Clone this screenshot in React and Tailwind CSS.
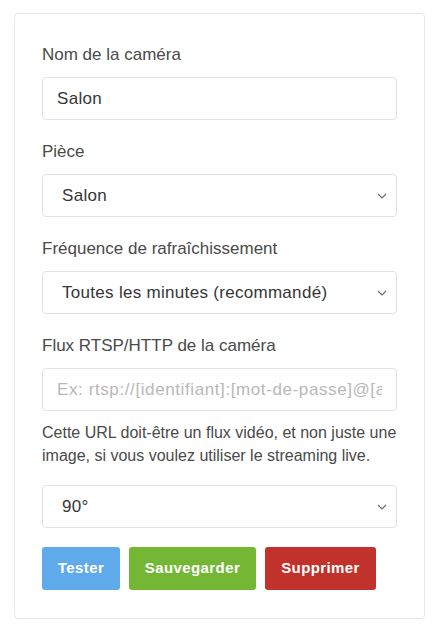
import React, { useState } from 'react';

const Chevron = () => (
  <svg className="pointer-events-none absolute right-[10px] top-1/2 -translate-y-1/2" width="10" height="6" viewBox="0 0 10 6" fill="none">
    <path d="M1 1l4 4 4-4" stroke="#6b6b6b" strokeWidth="1.2" />
  </svg>
);

const Select = ({ value, options, onChange }) => (
  <div className="relative">
    <select
      value={value}
      onChange={(e) => onChange(e.target.value)}
      className="h-[43px] w-full appearance-none rounded-[4px] border border-[#e2e2e2] bg-white pl-[19px] pr-8 text-[17px] tracking-[0.3px] text-[#363636] outline-none"
    >
      {options.map((o) => (
        <option key={o}>{o}</option>
      ))}
    </select>
    <Chevron />
  </div>
);

const Label = ({ children }) => (
  <label className="mb-[10px] block text-[17px] leading-[24px] text-[#4a4a4a]">{children}</label>
);

export default function App() {
  const [name, setName] = useState('Salon');
  const [room, setRoom] = useState('Salon');
  const [freq, setFreq] = useState('Toutes les minutes (recommandé)');
  const [url, setUrl] = useState('');
  const [rot, setRot] = useState('90°');

  return (
    <div className="min-h-screen bg-white pl-[14px] pr-[20px] pt-[13px] font-['Liberation_Sans',Arial,sans-serif]">
      <div className="rounded-[4px] border border-[#e6e6e6] pl-[27px] pr-[27px] pt-[29px] pb-[28px]">
        {/* Camera name */}
        <Label>Nom de la caméra</Label>
        <input
          value={name}
          onChange={(e) => setName(e.target.value)}
          className="h-[43px] w-full rounded-[4px] border border-[#e2e2e2] px-[14px] text-[17px] tracking-[0.3px] text-[#363636] outline-none"
        />

        <div className="mt-[20px]">
          <Label>Pièce</Label>
          <Select value={room} options={['Salon', 'Cuisine', 'Chambre']} onChange={setRoom} />
        </div>

        <div className="mt-[20px]">
          <Label>Fréquence de rafraîchissement</Label>
          <Select
            value={freq}
            options={['Toutes les minutes (recommandé)', 'Toutes les 5 minutes']}
            onChange={setFreq}
          />
        </div>

        <div className="mt-[20px]">
          <Label>Flux RTSP/HTTP de la caméra</Label>
          <input
            value={url}
            onChange={(e) => setUrl(e.target.value)}
            placeholder="Ex: rtsp://[identifiant]:[mot-de-passe]@[adresse-ip]"
            className="h-[43px] w-full rounded-[4px] border border-[#e2e2e2] px-[14px] text-[17px] tracking-[0.6px] text-[#363636] outline-none placeholder:text-[#b8b8b8]"
          />
          <p className="mt-[10px] text-[16px] leading-[23px] text-[#4a4a4a]">
            Cette URL doit-être un flux vidéo, et non juste une image, si vous voulez utiliser le streaming live.
          </p>
        </div>

        <div className="mt-[18px]">
          <Select value={rot} options={['0°', '90°', '180°', '270°']} onChange={setRot} />
        </div>

        {/* Actions */}
        <div className="mt-[19px] flex gap-[9px]">
          <button className="h-[43px] w-[78px] rounded-[3px] bg-[#5faaeb] text-[15px] font-bold tracking-[0.4px] text-white">
            Tester
          </button>
          <button className="h-[43px] w-[127px] rounded-[3px] bg-[#73b735] text-[15px] font-bold tracking-[0.4px] text-white">
            Sauvegarder
          </button>
          <button className="h-[43px] w-[111px] rounded-[3px] bg-[#c1322c] text-[15px] font-bold tracking-[0.4px] text-white">
            Supprimer
          </button>
        </div>
      </div>
    </div>
  );
}
